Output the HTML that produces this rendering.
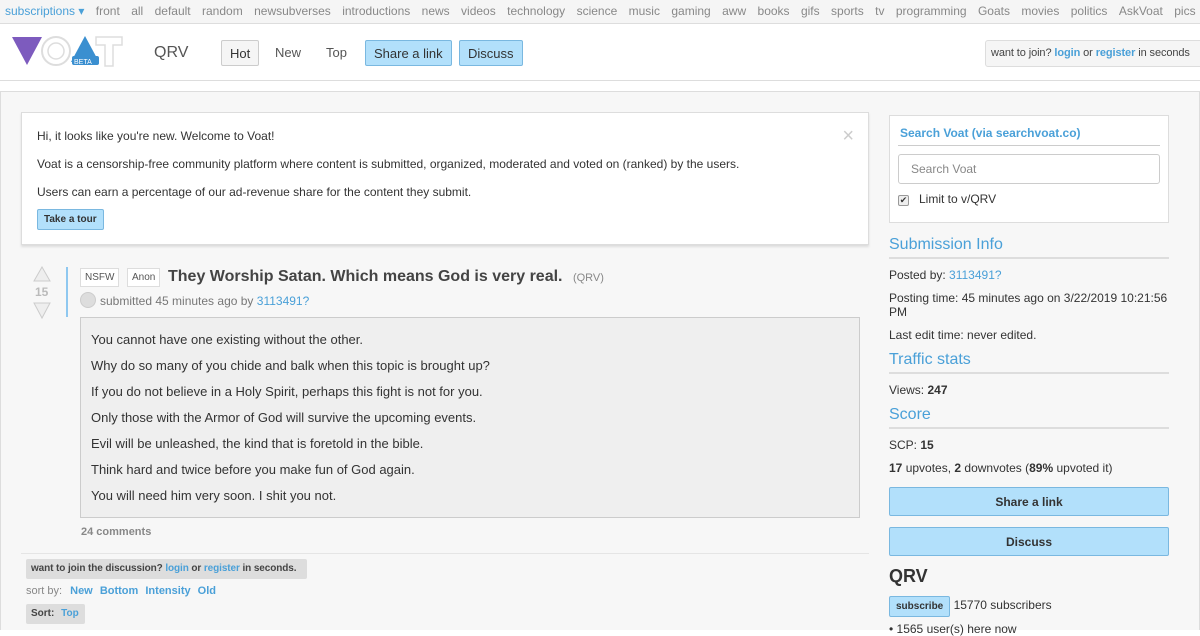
<!DOCTYPE html>
<html><head><style>
*{box-sizing:border-box;margin:0;padding:0}
body{width:1200px;height:630px;overflow:hidden;background:#fff;font-family:"Liberation Sans",Arial,sans-serif;color:#333;position:relative}
a{color:#4aa0d8;text-decoration:none}
.top{position:absolute;left:0;top:0;width:1200px;height:24px;background:#f5f5f5;border-bottom:1px solid #ddd;font-size:12px;color:#888;white-space:nowrap;padding:4px 0 0 5px;overflow:hidden}
.top span{margin-right:11.4px}
.hdr{position:absolute;left:0;top:24px;width:1200px;height:57px;background:#fff;border-bottom:1px solid #ddd}
.abs{position:absolute;white-space:nowrap}
.btn{position:absolute;top:40px;height:26px;font-size:13px;padding:5px 8px;border-radius:2px}
.main{position:absolute;left:0;top:91px;width:1200px;height:539px;background:#f7f7f7;border:1px solid #ddd;border-bottom:none}
.p{font-size:12px;color:#333;white-space:normal}
.body p{font-size:13px;margin-bottom:11px;color:#333;line-height:15px}
h3{font-weight:normal;color:#4aa0d8;font-size:16px;border-bottom:2px solid #ddd;padding-bottom:3px}
.side .p{margin-top:9px}
.bb{position:absolute;left:889px;width:280px;height:29px;background:#b2e0fb;border:1px solid #7ab8e0;border-radius:2px;text-align:center;font-weight:bold;font-size:12px;padding-top:7px;color:#333}
</style></head><body>
<div class="top"><span style="color:#4aa0d8">subscriptions ▾</span><span>front</span><span>all</span><span>default</span><span>random</span><span>newsubverses</span><span>introductions</span><span>news</span><span>videos</span><span>technology</span><span>science</span><span>music</span><span>gaming</span><span>aww</span><span>books</span><span>gifs</span><span>sports</span><span>tv</span><span>programming</span><span>Goats</span><span>movies</span><span>politics</span><span>AskVoat</span><span>pics</span></div>
<div class="hdr"></div>
<svg class="abs" style="left:10px;top:34px" width="115" height="34"><polygon points="2,3 32,3 17,31" fill="#7d5bbe"/><circle cx="46" cy="17" r="14" fill="none" stroke="#ddd" stroke-width="2"/><circle cx="46" cy="17" r="8" fill="none" stroke="#ddd" stroke-width="1.5"/><polygon points="75,2 89,28 61,28" fill="#3a8fd0"/><rect x="62" y="22" width="27" height="9" rx="2" fill="#3a8fd0"/><text x="64" y="30" font-size="7" fill="#fff" font-family="Liberation Sans">BETA</text><path d="M86 3h26v8h-9v21h-8V11h-9z" fill="none" stroke="#ddd" stroke-width="1.5"/></svg>
<div class="abs" style="left:154px;top:44px;font-size:16px;color:#555">QRV</div>
<div class="btn" style="left:221px;border:1px solid #ccc;background:#f5f5f5">Hot</div>
<div class="btn" style="left:267px;color:#555">New</div>
<div class="btn" style="left:318px;color:#555">Top</div>
<div class="btn" style="left:365px;background:#b2e0fb;border:1px solid #7ab8e0">Share a link</div>
<div class="btn" style="left:459px;background:#b2e0fb;border:1px solid #7ab8e0">Discuss</div>
<div class="abs" style="left:985px;top:40px;height:27px;width:220px;background:#f5f5f5;border:1px solid #ddd;border-radius:3px;font-size:11px;padding:6px 5px;color:#444;letter-spacing:-0.1px">want to join? <a style="font-weight:bold">login</a> or <a style="font-weight:bold">register</a> in seconds</div>
<div class="main"></div>
<div class="abs" style="left:21px;top:112px;width:848px;height:133px;background:#fff;border:1px solid #ddd;box-shadow:0 2px 2px #ddd;padding:16px 15px;font-size:12px">
<div>Hi, it looks like you're new. Welcome to Voat!</div>
<div style="margin-top:14px">Voat is a censorship-free community platform where content is submitted, organized, moderated and voted on (ranked) by the users.</div>
<div style="margin-top:14px">Users can earn a percentage of our ad-revenue share for the content they submit.</div>
<div style="margin-top:10px;display:inline-block;background:#b2e0fb;border:1px solid #7ab8e0;border-radius:2px;font-size:10px;font-weight:bold;padding:4px 6px">Take a tour</div>
<div class="abs" style="right:14px;top:12px;font-size:20px;color:#ccc">×</div></div>
<svg class="abs" style="left:33px;top:266px" width="18" height="54"><polygon points="9,1 17,15 1,15" fill="#eee" stroke="#ccc"/><polygon points="1,37 17,37 9,52" fill="#eee" stroke="#ccc"/></svg>
<div class="abs" style="left:35px;top:285px;font-size:12px;color:#bbb;font-weight:bold">15</div>
<div class="abs" style="left:66px;top:267px;width:2px;height:50px;background:#8fc8f0"></div>
<div class="abs" style="left:80px;top:268px;border:1px solid #ddd;font-size:10px;padding:3px 4px;color:#555;background:#fff">NSFW</div>
<div class="abs" style="left:127px;top:268px;border:1px solid #ddd;font-size:10px;padding:3px 4px;color:#555;background:#fff">Anon</div>
<div class="abs" style="left:168px;top:268px;font-size:16px;font-weight:bold;color:#444">They Worship Satan. Which means God is very real. <span style="font-size:11px;color:#888;font-weight:normal;margin-left:6px">(QRV)</span></div>
<div class="abs" style="left:80px;top:292px;font-size:12px;color:#777"><span style="display:inline-block;width:16px;height:16px;border-radius:50%;background:#ddd;border:1px solid #ccc;vertical-align:-3px;margin-right:4px"></span>submitted 45 minutes ago by <a>3113491?</a></div>
<div class="abs body" style="left:80px;top:317px;width:780px;height:201px;background:#efefef;border:1px solid #ccc;padding:14px 10px">
<p>You cannot have one existing without the other.</p><p>Why do so many of you chide and balk when this topic is brought up?</p><p>If you do not believe in a Holy Spirit, perhaps this fight is not for you.</p><p>Only those with the Armor of God will survive the upcoming events.</p><p>Evil will be unleashed, the kind that is foretold in the bible.</p><p>Think hard and twice before you make fun of God again.</p><p>You will need him very soon. I shit you not.</p></div>
<div class="abs" style="left:81px;top:526px;font-size:11px;font-weight:bold;color:#888">24 comments</div>
<div class="abs" style="left:21px;top:553px;width:848px;border-top:1px solid #e5e5e5"></div>
<div class="abs" style="left:26px;top:559px;width:281px;height:20px;background:#ddd;border-radius:2px;font-size:10px;font-weight:bold;padding:4px 5px;color:#444;letter-spacing:-0.1px">want to join the discussion? <a>login</a> or <a>register</a> in seconds.</div>
<div class="abs" style="left:26px;top:585px;font-size:11px;color:#888">sort by: <a style="font-weight:bold;margin-left:5px">New</a> <a style="font-weight:bold;margin-left:4px">Bottom</a> <a style="font-weight:bold;margin-left:4px">Intensity</a> <a style="font-weight:bold;margin-left:4px">Old</a></div>
<div class="abs" style="left:26px;top:604px;width:59px;height:20px;background:#ddd;border-radius:2px;font-size:10px;font-weight:bold;padding:4px 5px;color:#444">Sort: <a style="margin-left:4px">Top</a></div>
<div class="abs" style="left:889px;top:115px;width:280px;height:108px;background:#fff;border:1px solid #ddd;padding:10px 8px">
<div style="color:#4aa0d8;font-weight:bold;font-size:12px;border-bottom:1px solid #ccc;padding:0 2px 5px">Search Voat (via searchvoat.co)</div>
<div style="margin-top:8px;height:30px;border:1px solid #ccc;border-radius:3px;font-size:12px;color:#888;padding:7px 12px">Search Voat</div>
<div style="margin-top:8px;font-size:12px"><span style="display:inline-block;width:11px;height:11px;border:1px solid #999;border-radius:2px;background:#eee;font-size:9px;line-height:9px;text-align:center;margin-right:10px">✔</span>Limit to v/QRV</div></div>
<div class="abs side" style="left:889px;top:236px;width:280px;white-space:normal">
<h3>Submission Info</h3>
<div class="p">Posted by: <a>3113491?</a></div>
<div class="p" style="margin-top:9px">Posting time: 45 minutes ago on 3/22/2019 10:21:56 PM</div>
<div class="p">Last edit time: never edited.</div>
<h3 style="margin-top:9px">Traffic stats</h3>
<div class="p">Views: <b>247</b></div>
<h3 style="margin-top:9px">Score</h3>
<div class="p">SCP: <b>15</b></div>
<div class="p"><b>17</b> upvotes, <b>2</b> downvotes (<b>89%</b> upvoted it)</div></div>
<div class="bb" style="top:487px">Share a link</div>
<div class="bb" style="top:527px">Discuss</div>
<div class="abs" style="left:889px;top:566px;font-size:18px;font-weight:bold;color:#333">QRV</div>
<div class="abs" style="left:889px;top:596px;font-size:12px"><span style="display:inline-block;background:#b2e0fb;border:1px solid #7ab8e0;border-radius:2px;font-size:10px;font-weight:bold;padding:4px 6px">subscribe</span> 15770 subscribers</div>
<div class="abs" style="left:889px;top:622px;font-size:12px">• 1565 user(s) here now</div>
</body></html>
